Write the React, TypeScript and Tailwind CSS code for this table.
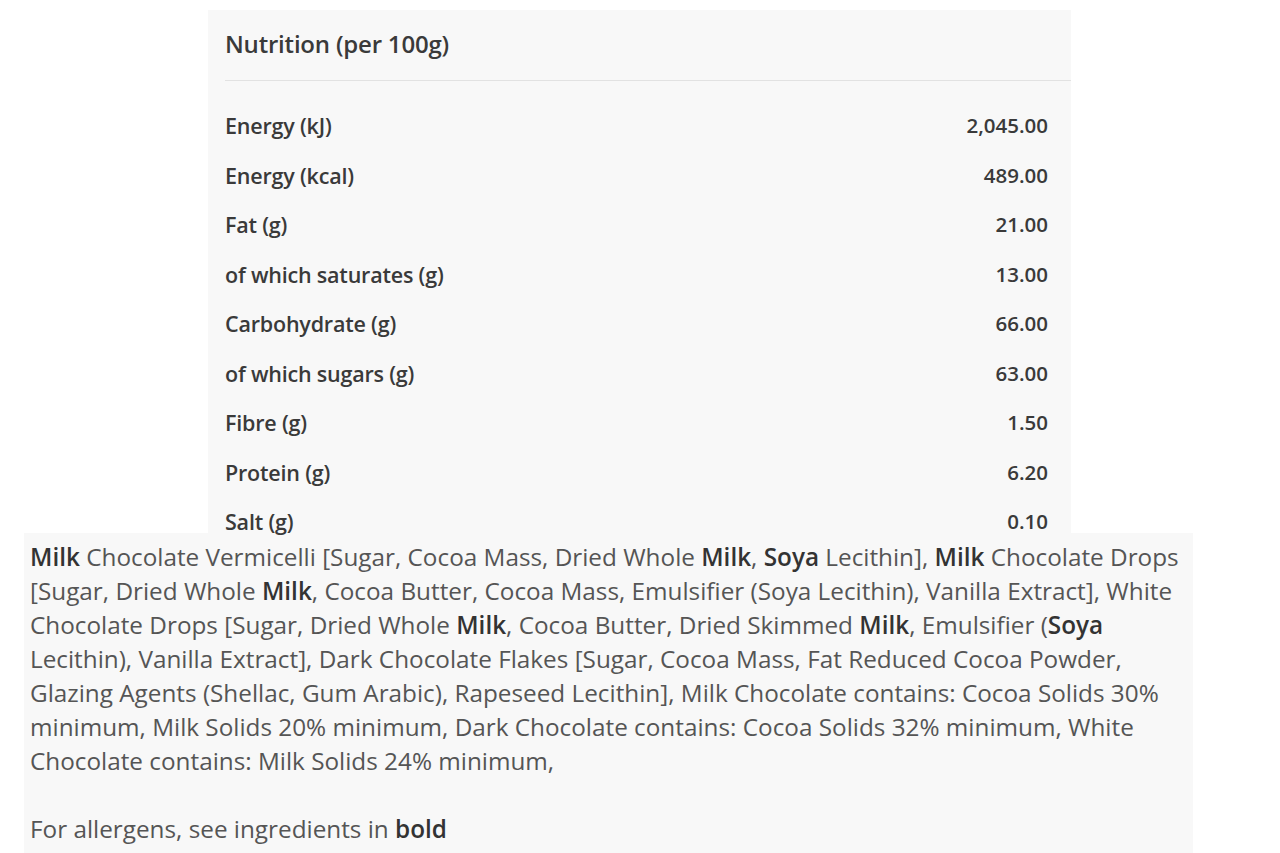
import React from "react";

const rows: [string, string][] = [
  ["Energy (kJ)", "2,045.00"],
  ["Energy (kcal)", "489.00"],
  ["Fat (g)", "21.00"],
  ["of which saturates (g)", "13.00"],
  ["Carbohydrate (g)", "66.00"],
  ["of which sugars (g)", "63.00"],
  ["Fibre (g)", "1.50"],
  ["Protein (g)", "6.20"],
  ["Salt (g)", "0.10"],
];

const B = ({ children }: { children: React.ReactNode }) => (
  <b className="font-semibold text-[#333]">{children}</b>
);

export default function App() {
  return (
    <div className="w-[1280px] h-[853px] overflow-hidden bg-white font-['Open_Sans',sans-serif]">
      <div className="ml-[208px] mt-[10px] w-[863px] h-[523px] bg-[#f8f8f8]">
        <div className="h-[70px] pb-[2px] pl-[17px] flex items-center text-[24px] font-semibold text-[#3a3a3a] tracking-[-0.2px]">
          Nutrition (per 100g)
        </div>
        <div className="ml-[17px] h-px bg-[#e2e2e2]" />
        <div className="pt-[20px] pl-[17px] pr-[23px]">
          {rows.map(([label, value]) => (
            <div
              key={label}
              className="h-[49.5px] last:h-[36px] leading-[49.5px] flex justify-between font-semibold text-[#3a3a3a]"
            >
              <span className="text-[21.5px] tracking-[-0.2px]">{label}</span>
              <span className="text-[20.5px]">{value}</span>
            </div>
          ))}
        </div>
      </div>
      <div className="ml-[24px] w-[1169px] h-[320px] bg-[#f8f8f8] pl-[6px] pt-[7px] text-[24.3px] leading-[34px] text-[#555] whitespace-nowrap">
        <B>Milk</B> Chocolate Vermicelli [Sugar, Cocoa Mass, Dried Whole <B>Milk</B>, <B>Soya</B> Lecithin], <B>Milk</B> Chocolate Drops
        <br />
        [Sugar, Dried Whole <B>Milk</B>, Cocoa Butter, Cocoa Mass, Emulsifier (Soya Lecithin), Vanilla Extract], White
        <br />
        Chocolate Drops [Sugar, Dried Whole <B>Milk</B>, Cocoa Butter, Dried Skimmed <B>Milk</B>, Emulsifier (<B>Soya</B>
        <br />
        Lecithin), Vanilla Extract], Dark Chocolate Flakes [Sugar, Cocoa Mass, Fat Reduced Cocoa Powder,
        <br />
        Glazing Agents (Shellac, Gum Arabic), Rapeseed Lecithin], Milk Chocolate contains: Cocoa Solids 30%
        <br />
        minimum, Milk Solids 20% minimum, Dark Chocolate contains: Cocoa Solids 32% minimum, White
        <br />
        Chocolate contains: Milk Solids 24% minimum,
        <br />
        <br />
        For allergens, see ingredients in <B>bold</B>
      </div>
    </div>
  );
}
